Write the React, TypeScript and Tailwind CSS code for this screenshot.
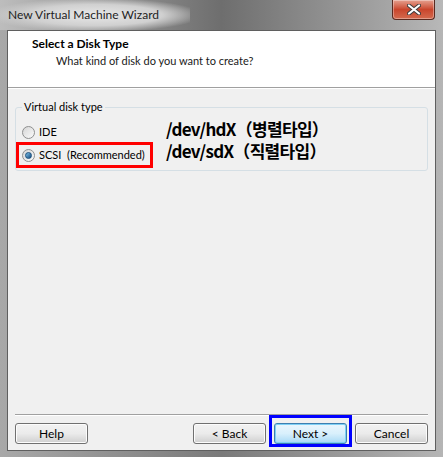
import React from "react";

const ui = { fontFamily: 'Lato, "Noto Sans", sans-serif' };

function Radio({ checked }: { checked?: boolean }) {
  return (
    <span className="relative inline-flex h-[13px] w-[13px] items-center justify-center rounded-full border border-[#8e8f8f] bg-gradient-to-br from-[#d6d6d6] to-[#fbfbfb]">
      {checked && (
        <span className="h-[7px] w-[7px] rounded-full border border-[#1b4f7d] bg-gradient-to-br from-[#7fc3ea] to-[#124a7d]" />
      )}
    </span>
  );
}

function Btn({ label, primary }: { label: string; primary?: boolean }) {
  return (
    <div
      className={
        "flex h-[21px] w-[73px] items-center justify-center rounded-[3px] border text-[12px] text-black " +
        (primary
          ? "border-[#3c7fb1] bg-gradient-to-b from-[#eaf6fd] via-[#d9f0fc] to-[#a7d9f5] shadow-[inset_0_0_0_1px_#7ed0f5]"
          : "border-[#707070] bg-gradient-to-b from-[#f2f2f2] via-[#ebebeb] to-[#cfcfcf] shadow-[inset_0_0_0_1px_#fcfcfc]")
      }
      style={ui}
    >
      {label}
    </div>
  );
}

export default function App() {
  return (
    <div className="relative h-[457px] w-[443px] overflow-hidden bg-[#b9b9b9]" style={ui}>
      <div className="flex h-full w-full flex-col bg-gradient-to-r from-[#a8a8a8] via-[#7a7a7a] to-[#b5b5b5]">
        {/* title bar */}
        <div className="relative flex h-[30px] items-start">
          <div className="absolute inset-0 bg-gradient-to-r from-[#bdbdbd] via-[#6e6e6e] to-[#b8b8b8]" />
          <div className="absolute left-0 top-0 h-[30px] w-[190px] bg-[radial-gradient(ellipse_at_center,#e8e8e8_0%,#d0d0d0_50%,rgba(200,200,200,0)_80%)]" />
          <span className="relative ml-[8px] mt-[6px] text-[12px] text-[#1e1e1e]">New Virtual Machine Wizard</span>
          <div className="absolute right-[8px] top-0 flex h-[20px] w-[43px] items-center justify-center rounded-b-[4px] border border-t-0 border-[#5a2a20] bg-gradient-to-b from-[#e4a08f] via-[#c9452c] to-[#d46a4e] shadow-[inset_0_0_0_1px_rgba(255,255,255,0.35)]">
            <svg width="14" height="11" viewBox="0 0 14 11">
              <path d="M2 1.5 L12 9.5 M12 1.5 L2 9.5" stroke="#3b3b3b" strokeWidth="4" strokeLinecap="round" />
              <path d="M2 1.5 L12 9.5 M12 1.5 L2 9.5" stroke="#ffffff" strokeWidth="2.2" strokeLinecap="round" />
            </svg>
          </div>
        </div>
        {/* client */}
        <div className="mb-[6px] ml-[7px] mr-[7px] flex flex-1 flex-col border border-[#5f5f5f] bg-[#f0f0f0]">
          <div className="h-[57px] border-b border-[#a0a0a0] bg-white pl-[24px] pt-[5px]">
            <div className="text-[12px] font-bold leading-[16px] text-black">Select a Disk Type</div>
            <div className="ml-[24px] mt-[1px] text-[11px] leading-[16px] text-[#1a1a1a]">What kind of disk do you want to create?</div>
          </div>
          <div className="h-px bg-white" />
          <div className="relative flex flex-1 flex-col px-[7px] pt-[18px]">
            <div className="relative h-[64px] rounded-[3px] border border-[#d5dfe5]">
              <span className="absolute left-[6px] top-[-9px] bg-[#f0f0f0] px-[2px] text-[11px] leading-[16px] text-black">
                Virtual disk type
              </span>
              <div className="absolute left-[6px] top-[16px] flex items-center gap-[4px] text-[11px] leading-[16px] text-black">
                <Radio />
                <span>IDE</span>
              </div>
              <div className="absolute left-[6px] top-[39px] flex items-center gap-[4px] text-[11px] leading-[16px] text-black">
                <Radio checked />
                <span>SCSI&nbsp;&nbsp;(Recommended)</span>
              </div>
              <div className="absolute left-[0px] top-[34px] h-[26px] w-[137px] border-[3px] border-[#ff0000]" />
              <div
                className="absolute left-[150px] top-[10px] flex flex-col text-[17px] font-bold leading-[22px] tracking-[-0.7px] text-black"
                style={{ fontFamily: '"Noto Sans CJK KR", sans-serif' }}
              >
                <span>/dev/hdX（병렬타입）</span>
                <span>/dev/sdX（직렬타입）</span>
              </div>
            </div>
            <div className="flex-1" />
            <div className="border-t border-[#a0a0a0]" />
            <div className="h-px bg-white" />
            <div className="flex items-start justify-between pb-[6px] pt-[7px]">
              <Btn label="Help" />
              <div className="flex gap-[8px]">
                <Btn label="< Back" />
                <div className="relative">
                  <Btn label="Next >" primary />
                  <div className="absolute left-[-5px] top-[-8px] h-[32px] w-[83px] border-[3px] border-[#0000ff]" />
                </div>
                <Btn label="Cancel" />
              </div>
            </div>
          </div>
        </div>
      </div>
    </div>
  );
}
